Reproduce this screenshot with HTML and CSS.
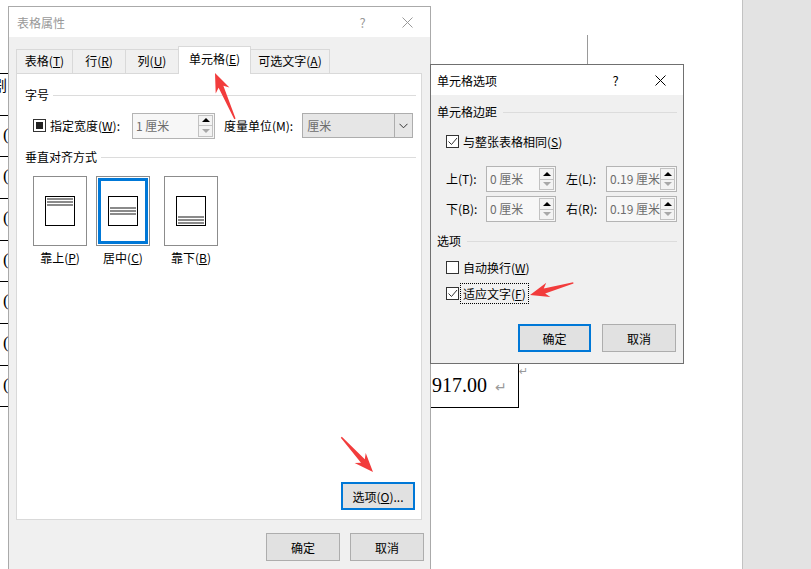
FILE: index.html
```html
<!DOCTYPE html>
<html lang="zh-CN">
<head>
    <meta charset="UTF-8">
    <title>表格属性</title>
    <link rel="stylesheet" href="styles.css">
</head>
<body>

    <!-- document behind the dialogs -->
    <div class="table-edge">
        <div class="edge-row"><span class="edge-cut">剧</span></div>
        <div class="edge-row"><span>(</span></div>
        <div class="edge-row"><span>(</span></div>
        <div class="edge-row"><span>(</span></div>
        <div class="edge-row"><span>(</span></div>
        <div class="edge-row"><span>(</span></div>
        <div class="edge-row"><span>(</span></div>
        <div class="edge-row"><span>(</span></div>
    </div>
    <div class="rule-v"></div>
    <div class="cell-last">917.00<span class="ret">↵</span></div>
    <span class="row-end">↵</span>
    <div class="page-margin"></div>

    <!-- 表格属性 -->
    <div class="win win-props inactive">
        <div class="win-title">
            <span class="win-caption">表格属性</span>
            <span class="win-ctl">?</span>
            <span class="win-ctl">
                <svg width="11" height="11" viewBox="0 0 11 11"><path d="M0.5 0.5L10.5 10.5M10.5 0.5L0.5 10.5" stroke="currentColor" fill="none"/></svg>
            </span>
        </div>
        <div class="win-body">
            <div class="tabs">
                <div class="tab tab-first">表格(<u>T</u>)</div>
                <div class="tab">行(<u>R</u>)</div>
                <div class="tab">列(<u>U</u>)</div>
                <div class="tab active">单元格(<u>E</u>)</div>
                <div class="tab tab-last">可选文字(<u>A</u>)</div>
            </div>
            <div class="tab-panel">
                <div class="group-title"><span>字号</span><i></i></div>
                <div class="size-row">
                    <span class="check mixed"></span>
                    <span class="size-label">指定宽度(<u>W</u>):</span>
                    <div class="spin spin-wide">
                        <span class="spin-value">1 厘米</span>
                        <span class="spin-btns"><span class="spin-up"></span><span class="spin-down"></span></span>
                    </div>
                    <span class="size-label">度量单位(M):</span>
                    <div class="combo">
                        <span class="combo-value">厘米</span>
                        <span class="combo-btn">
                            <svg width="9" height="6" viewBox="0 0 9 6"><path d="M0.5 0.8L4.5 4.8L8.5 0.8" stroke="#333" fill="none"/></svg>
                        </span>
                    </div>
                </div>
                <div class="group-title group-align"><span>垂直对齐方式</span><i></i></div>
                <div class="align-row">
                    <div class="align-opt">
                        <div class="align-box"><div class="align-icon at-top"><span></span><span></span><span></span></div></div>
                        <span class="align-label">靠上(<u>P</u>)</span>
                    </div>
                    <div class="align-opt">
                        <div class="align-box selected"><div class="align-icon at-center"><span></span><span></span><span></span></div></div>
                        <span class="align-label">居中(<u>C</u>)</span>
                    </div>
                    <div class="align-opt">
                        <div class="align-box"><div class="align-icon at-bottom"><span></span><span></span><span></span></div></div>
                        <span class="align-label">靠下(<u>B</u>)</span>
                    </div>
                </div>
                <div class="panel-foot">
                    <button class="btn btn-default">选项(<u>O</u>)...</button>
                </div>
            </div>
            <div class="win-foot foot-props">
                <button class="btn">确定</button>
                <button class="btn">取消</button>
            </div>
        </div>
    </div>

    <!-- 单元格选项 -->
    <div class="win win-cell">
        <div class="win-title">
            <span class="win-caption">单元格选项</span>
            <span class="win-ctl">?</span>
            <span class="win-ctl">
                <svg width="11" height="11" viewBox="0 0 11 11"><path d="M0.5 0.5L10.5 10.5M10.5 0.5L0.5 10.5" stroke="currentColor" fill="none"/></svg>
            </span>
        </div>
        <div class="win-body cell-body">
            <div class="group-title"><span>单元格边距</span><i></i></div>
            <label class="check-row first-check">
                <span class="check checked"><svg width="11" height="11" viewBox="0 0 11 11"><path d="M1.5 5.5L4.5 8.5L10 2" stroke="#333" fill="none"/></svg></span>
                <span>与整张表格相同(<u>S</u>)</span>
            </label>
            <div class="margin-grid">
                <span class="m-label">上(T):</span>
                <div class="spin"><span class="spin-value">0 厘米</span><span class="spin-btns"><span class="spin-up"></span><span class="spin-down"></span></span></div>
                <span class="m-label m-right">左(L):</span>
                <div class="spin"><span class="spin-value">0.19 厘米</span><span class="spin-btns"><span class="spin-up"></span><span class="spin-down"></span></span></div>
                <span class="m-label">下(B):</span>
                <div class="spin"><span class="spin-value">0 厘米</span><span class="spin-btns"><span class="spin-up"></span><span class="spin-down"></span></span></div>
                <span class="m-label m-right">右(R):</span>
                <div class="spin"><span class="spin-value">0.19 厘米</span><span class="spin-btns"><span class="spin-up"></span><span class="spin-down"></span></span></div>
            </div>
            <div class="group-title group-opts"><span>选项</span><i></i></div>
            <label class="check-row">
                <span class="check"></span>
                <span>自动换行(<u>W</u>)</span>
            </label>
            <label class="check-row">
                <span class="check checked"><svg width="11" height="11" viewBox="0 0 11 11"><path d="M1.5 5.5L4.5 8.5L10 2" stroke="#333" fill="none"/></svg></span>
                <span class="focused">适应文字(<u>F</u>)</span>
            </label>
            <div class="win-foot foot-cell">
                <button class="btn btn-default">确定</button>
                <button class="btn">取消</button>
            </div>
        </div>
    </div>

    <!-- red marker arrows -->
    <svg class="marks" width="811" height="569" viewBox="0 0 811 569">
        <g fill="#f23c3c">
            <polygon transform="translate(215 73) rotate(-113.5)" points="0,0 -19,-7.5 -15,-2.6 -50,-0.7 -50,0.7 -15,2.6 -19,7.5"/>
            <polygon transform="translate(373 472) rotate(47.6)" points="0,0 -19,-7.5 -15,-2.6 -47,-0.7 -47,0.7 -15,2.6 -19,7.5"/>
            <polygon transform="translate(530 295) rotate(164.4)" points="0,0 -19,-7.5 -15,-2.6 -45,-0.7 -45,0.7 -15,2.6 -19,7.5"/>
        </g>
    </svg>

</body>
</html>
```

FILE: styles.css
```css
* {
    box-sizing: border-box;
}
html, body {
    margin: 0;
    padding: 0;
}
body {
    position: relative;
    width: 811px;
    height: 569px;
    overflow: hidden;
    background: #fff;
    font-family: "Noto Sans CJK SC", "Noto Sans", sans-serif;
    font-size: 12px;
    color: #000;
}
u {
    text-underline-offset: 1px;
}

/* document */
.table-edge {
    position: absolute;
    left: 0;
    top: 73px;
    width: 8px;
}
.edge-row {
    height: 41.7px;
    border-top: 1px solid #000;
    overflow: hidden;
    padding-left: 3px;
    font-family: "Liberation Serif", serif;
    font-size: 17px;
    line-height: 38px;
}
.edge-row:last-child {
    border-bottom: 1px solid #000;
}
.edge-cut {
    display: block;
    margin-left: -11px;
    margin-top: -8px;
    font-family: "Noto Sans CJK SC", sans-serif;
    font-size: 15px;
}
.rule-v {
    position: absolute;
    left: 587px;
    top: 35px;
    width: 1px;
    height: 30px;
    background: #9a9a9a;
}
.cell-last {
    position: absolute;
    left: 430px;
    top: 363px;
    width: 89px;
    height: 45px;
    border-right: 1px solid #000;
    border-bottom: 1px solid #000;
    padding: 10px 0 0 2px;
    font-family: "Liberation Serif", serif;
    font-size: 20px;
    line-height: 24px;
}
.ret {
    margin-left: 8px;
    font-family: "DejaVu Sans", sans-serif;
    font-size: 14px;
    color: #9a9a9a;
}
.row-end {
    position: absolute;
    left: 519px;
    top: 365px;
    font-family: "DejaVu Sans", sans-serif;
    font-size: 11px;
    color: #9a9a9a;
}
.page-margin {
    position: absolute;
    left: 742px;
    top: 0;
    right: 0;
    bottom: 0;
    background: #e3e3e3;
    border-left: 1px solid #c2c2c2;
}

/* windows */
.win {
    position: absolute;
    display: flex;
    flex-direction: column;
    background: #f0f0f0;
}
.win-props {
    left: 8px;
    top: 6px;
    width: 423px;
    height: 580px;
    border: 1px solid #aaa;
}
.win-cell {
    left: 430px;
    top: 64px;
    width: 254px;
    height: 300px;
    border: 1px solid #707070;
    z-index: 2;
}
.win-title {
    display: flex;
    align-items: center;
    height: 30px;
    background: #fff;
    flex: none;
}
.win-caption {
    flex: 1;
    padding-left: 8px;
}
.win-cell .win-caption {
    padding-left: 6px;
}
.win-ctl {
    width: 45px;
    height: 100%;
    display: flex;
    align-items: center;
    justify-content: center;
    font-size: 13px;
}
.inactive .win-title {
    color: #999;
}
.win-body {
    flex: 1;
    display: flex;
    flex-direction: column;
    padding: 9px 8px 0 7px;
}

/* tabs */
.tabs {
    display: flex;
    align-items: flex-end;
    height: 27px;
    position: relative;
    z-index: 1;
}
.tab {
    flex: none;
    width: 54px;
    height: 24px;
    margin-right: -1px;
    border: 1px solid #d9d9d9;
    border-bottom: none;
    background: #f0f0f0;
    text-align: center;
    line-height: 22px;
    white-space: nowrap;
}
.tab-first {
    width: 57px;
}
.tab-last {
    width: 80px;
}
.tab.active {
    width: 73px;
    height: 28px;
    margin-bottom: -1px;
    background: #fff;
    line-height: 24px;
    position: relative;
}
.tab-panel {
    height: 447px;
    display: flex;
    flex-direction: column;
    background: #fff;
    border: 1px solid #d9d9d9;
    padding: 0 5px 9px 8px;
}

/* group headers */
.group-title {
    display: flex;
    align-items: center;
    height: 16px;
    line-height: 16px;
    margin-top: 13px;
}
.group-title i {
    flex: 1;
    height: 1px;
    margin-left: 4px;
    background: #dcdcdc;
}
.group-align {
    margin-top: 11px;
}

/* width row */
.size-row {
    display: flex;
    align-items: center;
    height: 25px;
    margin-top: 10px;
    padding-left: 8px;
}
.size-row .check {
    margin-right: 4px;
}
.size-label {
    white-space: nowrap;
}
.spin-wide {
    width: 83px;
    height: 25px;
    margin: 0 9px 0 12px;
}
.combo {
    display: flex;
    width: 111px;
    height: 25px;
    margin-left: 9px;
    border: 1px solid #adadad;
    background: #e6e6e6;
}
.combo-value {
    flex: 1;
    padding-left: 4px;
    line-height: 23px;
    color: #6d6d6d;
}
.combo-btn {
    width: 18px;
    display: flex;
    align-items: center;
    justify-content: center;
    border-left: 1px solid #adadad;
}

/* spin boxes */
.spin {
    display: flex;
    height: 26px;
    padding: 1px;
    border: 1px solid #b4b4b4;
    background: #f7f7f7;
}
.spin-value {
    flex: 1;
    overflow: hidden;
    white-space: nowrap;
    padding-left: 2px;
    line-height: 22px;
    color: #6d6d6d;
}
.spin-btns {
    display: flex;
    flex-direction: column;
    width: 15px;
    flex: none;
}
.spin-up, .spin-down {
    flex: 1;
    display: flex;
    align-items: center;
    justify-content: center;
    border: 1px solid #c2c2c2;
    background: #f3f3f3;
}
.spin-down {
    border-top: none;
}
.spin-up::after {
    content: "";
    border-left: 4px solid transparent;
    border-right: 4px solid transparent;
    border-bottom: 4px solid #000;
}
.spin-down::after {
    content: "";
    border-left: 4px solid transparent;
    border-right: 4px solid transparent;
    border-top: 4px solid #a8a8a8;
}

/* checkboxes */
.check {
    display: inline-flex;
    align-items: center;
    justify-content: center;
    width: 13px;
    height: 13px;
    flex: none;
    border: 1px solid #333;
    background: #fff;
}
.check.mixed::after {
    content: "";
    width: 7px;
    height: 7px;
    background: #222;
}
.check-row {
    display: flex;
    align-items: center;
    height: 16px;
    margin-top: 10px;
    padding-left: 9px;
}
.check-row .check {
    margin-right: 4px;
}
.first-check {
    margin-top: 13px;
}
.focused {
    outline: 1px dotted #000;
    outline-offset: 1px;
    padding: 0 1px;
    margin-left: -1px;
}

/* alignment choices */
.align-row {
    display: flex;
    gap: 9px;
    margin-top: 11px;
    padding-left: 8px;
}
.align-opt {
    width: 54px;
    display: flex;
    flex-direction: column;
    align-items: center;
}
.align-opt:last-child {
    margin-left: 5px;
}
.align-box {
    width: 54px;
    height: 70px;
    display: flex;
    align-items: center;
    justify-content: center;
    border: 1px solid #8c8c8c;
    background: #fff;
}
.align-box.selected {
    box-shadow: inset 0 0 0 1px #fff, inset 0 0 0 4px #0078d7;
}
.align-icon {
    width: 30px;
    height: 30px;
    display: flex;
    flex-direction: column;
    gap: 1px;
    padding: 1px;
    border: 1px solid #000;
    background: #fff;
}
.align-icon span {
    height: 2px;
    background: #8a8a8a;
}
.at-center {
    justify-content: center;
}
.at-bottom {
    justify-content: flex-end;
}
.align-label {
    margin-top: 4px;
    line-height: 16px;
    white-space: nowrap;
}

/* buttons */
.btn {
    width: 74px;
    height: 28px;
    padding: 0;
    border: 1px solid #adadad;
    background: #e1e1e1;
    font: inherit;
    color: #000;
}
.btn-default {
    border: 2px solid #0078d7;
}
.panel-foot {
    margin-top: auto;
    display: flex;
    justify-content: flex-end;
    padding-right: 1px;
}
.win-foot {
    display: flex;
    justify-content: flex-end;
    gap: 10px;
}
.foot-props {
    margin: 13px -2px 0 0;
}

/* cell options */
.cell-body {
    padding: 0 6px 0 6px;
}
.cell-body .group-title {
    margin-top: 9px;
}
.cell-body .group-title i {
    margin-left: 6px;
}
.cell-body .group-opts {
    margin-top: 11px;
}
.margin-grid {
    display: grid;
    grid-template-columns: 40px 70px 50px 71px;
    grid-auto-rows: 26px;
    row-gap: 4px;
    margin-top: 17px;
    padding-left: 9px;
}
.m-label {
    line-height: 26px;
    white-space: nowrap;
}
.m-right {
    padding-left: 10px;
}
.foot-cell {
    margin: 23px 1px 0 0;
    gap: 11px;
}
.foot-cell .btn:first-child {
    width: 73px;
}

/* markers */
.marks {
    position: absolute;
    left: 0;
    top: 0;
    z-index: 10;
    pointer-events: none;
}
```
